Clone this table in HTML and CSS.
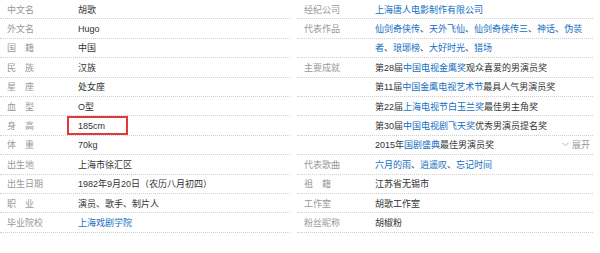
FILE: index.html
```html
<!DOCTYPE html>
<html lang="zh-CN">
<head>
<meta charset="utf-8">
<title>胡歌 基本信息</title>
<link rel="stylesheet" href="styles.css">
</head>
<body>
<div class="info">
  <div class="col col-left">
    <div class="row"><span class="k">中文名</span><span class="v">胡歌</span></div>
    <div class="row"><span class="k">外文名</span><span class="v">Hugo</span></div>
    <div class="row"><span class="k">国&emsp;籍</span><span class="v">中国</span></div>
    <div class="row"><span class="k">民&emsp;族</span><span class="v">汉族</span></div>
    <div class="row"><span class="k">星&emsp;座</span><span class="v">处女座</span></div>
    <div class="row"><span class="k">血&emsp;型</span><span class="v">O型</span></div>
    <div class="row row-mark"><span class="k">身&emsp;高</span><span class="v">185cm</span></div>
    <div class="row"><span class="k">体&emsp;重</span><span class="v">70kg</span></div>
    <div class="row"><span class="k">出生地</span><span class="v">上海市徐汇区</span></div>
    <div class="row"><span class="k">出生日期</span><span class="v">1982年9月20日（农历八月初四）</span></div>
    <div class="row"><span class="k">职&emsp;业</span><span class="v">演员、歌手、制片人</span></div>
    <div class="row"><span class="k">毕业院校</span><span class="v"><a href="#">上海戏剧学院</a></span></div>
  </div>
  <div class="col col-right">
    <div class="row"><span class="k">经纪公司</span><span class="v"><a href="#">上海唐人电影制作有限公司</a></span></div>
    <div class="row"><span class="k">代表作品</span><span class="v"><a href="#">仙剑奇侠传</a>、<a href="#">天外飞仙</a>、<a href="#">仙剑奇侠传三</a>、<a href="#">神话</a>、<a href="#">伪装</a></span></div>
    <div class="row"><span class="k"></span><span class="v"><a href="#">者</a>、<a href="#">琅琊榜</a>、<a href="#">大好时光</a>、<a href="#">猎场</a></span></div>
    <div class="row"><span class="k">主要成就</span><span class="v">第28届<a href="#">中国电视金鹰奖</a>观众喜爱的男演员奖</span></div>
    <div class="row"><span class="k"></span><span class="v">第11届<a href="#">中国金鹰电视艺术节</a>最具人气男演员奖</span></div>
    <div class="row"><span class="k"></span><span class="v">第22届<a href="#">上海电视节白玉兰奖</a>最佳男主角奖</span></div>
    <div class="row"><span class="k"></span><span class="v">第30届<a href="#">中国电视剧飞天奖</a>优秀男演员提名奖</span></div>
    <div class="row"><span class="k"></span><span class="v">2015年<a href="#">国剧盛典</a>最佳男演员奖</span><span class="more"><svg width="7" height="5" viewBox="0 0 7 5"><path d="M0.5 0.8 L3.5 3.8 L6.5 0.8" fill="none" stroke="#b5b5b5" stroke-width="1"/></svg>展开</span></div>
    <div class="row"><span class="k">代表歌曲</span><span class="v"><a href="#">六月的雨</a>、<a href="#">逍遥叹</a>、<a href="#">忘记时间</a></span></div>
    <div class="row"><span class="k">祖&emsp;籍</span><span class="v">江苏省无锡市</span></div>
    <div class="row"><span class="k">工作室</span><span class="v">胡歌工作室</span></div>
    <div class="row"><span class="k">粉丝昵称</span><span class="v">胡椒粉</span></div>
  </div>
</div>
</body>
</html>
```
FILE: styles.css
```css
html, body {
  margin: 0;
  padding: 0;
  background: #fff;
}
body {
  font-family: "Liberation Sans", "Noto Sans CJK SC", sans-serif;
  font-size: 9px;
  color: #333;
}
.info {
  display: flex;
  gap: 7px;
  width: 593px;
}
.col-left {
  width: 290px;
}
.col-right {
  width: 296px;
}
.row {
  display: flex;
  align-items: center;
  height: 19.4px;
  box-sizing: border-box;
  border-bottom: 1px dotted #cfcfcf;
  white-space: nowrap;
}
.k {
  flex: none;
  width: 71px;
  padding-left: 7px;
  color: #999;
}
.v {
  flex: 1;
}
a {
  color: #136ec2;
  text-decoration: none;
}
.more {
  display: flex;
  align-items: center;
  gap: 3px;
  padding-right: 3px;
  color: #999;
}
.row-mark {
  position: relative;
}
.row-mark::after {
  content: "";
  position: absolute;
  left: 67px;
  top: 0;
  width: 61px;
  height: 19px;
  box-sizing: border-box;
  border: 2px solid #e4393c;
}
```
